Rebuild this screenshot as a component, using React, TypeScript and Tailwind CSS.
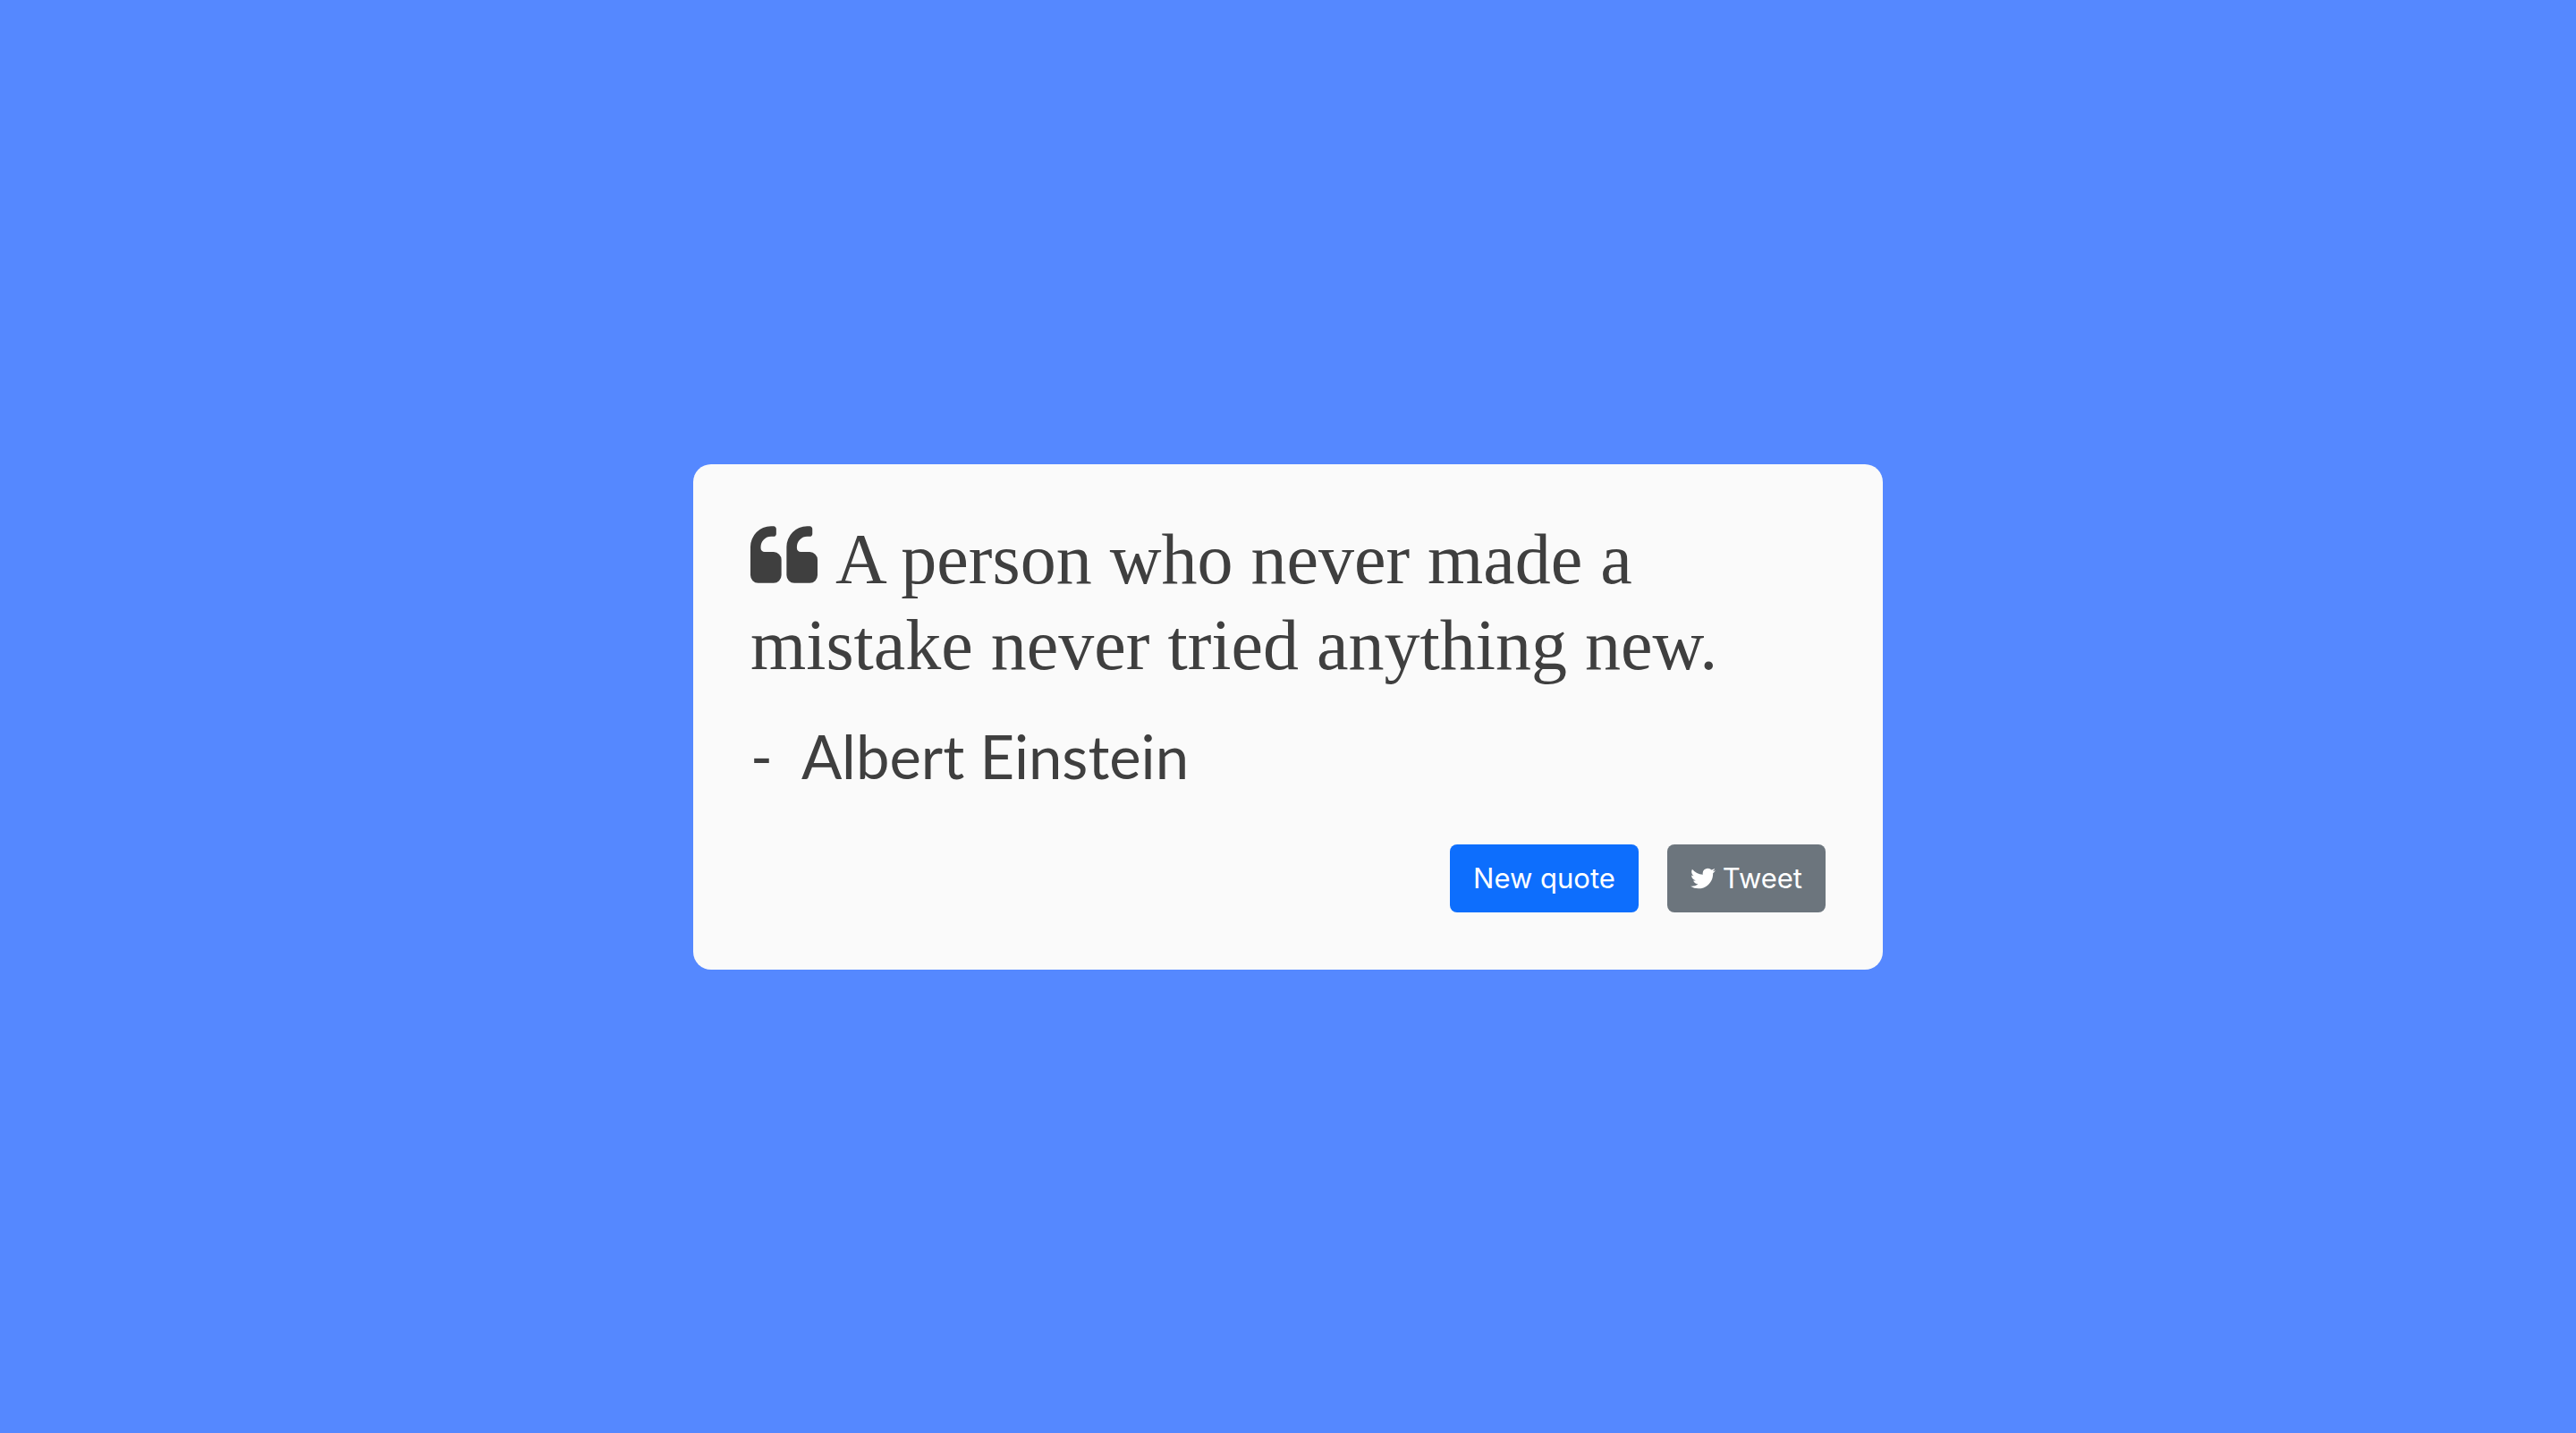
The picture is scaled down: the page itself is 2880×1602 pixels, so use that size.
function QuoteLeftIcon() {
  return (
    <svg viewBox="64 128 1664 1408" className="mr-5 inline-block h-16 w-[75px] align-baseline" fill="currentColor" aria-hidden="true">
      <path d="M832 960v384q0 80-56 136t-136 56h-384q-80 0-136-56t-56-136v-704q0-104 40.5-198.5t109.5-163.5 163.5-109.5 198.5-40.5h64q26 0 45 19t19 45v128q0 26-19 45t-45 19h-64q-106 0-181 75t-75 181v32q0 40 28 68t68 28h224q80 0 136 56t56 136zm896 0v384q0 80-56 136t-136 56h-384q-80 0-136-56t-56-136v-704q0-104 40.5-198.5t109.5-163.5 163.5-109.5 198.5-40.5h64q26 0 45 19t19 45v128q0 26-19 45t-45 19h-64q-106 0-181 75t-75 181v32q0 40 28 68t68 28h224q80 0 136 56t56 136z" />
    </svg>
  );
}

function TwitterIcon() {
  return (
    <svg viewBox="108 256 1576 1280" className="h-6 w-7" fill="currentColor" aria-hidden="true">
      <path d="M1684 408q-67 98-162 167 1 14 1 42 0 130-38 259.5t-115.5 248.5-184.5 210.5-258 146-323 54.5q-271 0-496-145 35 4 78 4 225 0 401-138-105-2-188-64.5t-114-159.5q33 5 61 5 43 0 85-11-112-23-185.5-111.5t-73.5-205.5v-4q68 38 146 41-66-44-105-115t-39-154q0-88 44-163 121 149 294.5 238.5t371.5 99.5q-8-38-8-74 0-134 94.5-228.5t228.5-94.5q140 0 236 102 109-21 205-78-37 115-142 178 93-10 186-50z" />
    </svg>
  );
}

export default function App() {
  return (
    <main className="flex min-h-screen items-center justify-center bg-[#5588ff] p-8 text-[#3f3f3f]">
      <section className="w-full max-w-[1330px] rounded-[20px] bg-[#fafafa] px-16 pt-[58px] pb-16">
        <blockquote className="mb-7 font-['Liberation_Serif',serif] text-[80px] leading-24">
          <QuoteLeftIcon />A person who never made a mistake never tried anything new.
        </blockquote>
        <p className="mb-[51px] flex gap-8 font-['Lato',sans-serif] text-[67px] leading-24">
          <span>-</span> <span>Albert Einstein</span>
        </p>
        <div className="flex justify-end gap-8 font-['Inter',sans-serif] text-[31px] leading-12 text-white">
          <button type="button" className="rounded-lg bg-[#0d6efd] px-[26px] py-3.5">
            New quote
          </button>
          <a href="#tweet" className="flex items-center gap-2 rounded-lg bg-[#6c757d] px-[26px] py-3.5">
            <TwitterIcon />
            Tweet
          </a>
        </div>
      </section>
    </main>
  );
}
